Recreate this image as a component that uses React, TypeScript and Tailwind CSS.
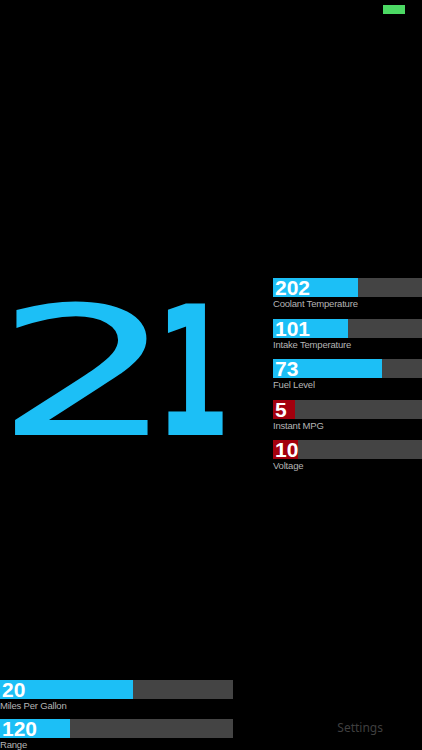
import React from "react";

const BLUE = "bg-[#1cbff6]";
const RED = "bg-[#a3000d]";

interface Gauge {
	value: string;
	label: string;
	fill: number; // px
	tone: "blue" | "red";
}

const sideGauges: Gauge[] = [
	{ value: "202", label: "Coolant Temperature", fill: 85, tone: "blue" },
	{ value: "101", label: "Intake Temperature", fill: 75, tone: "blue" },
	{ value: "73", label: "Fuel Level", fill: 109, tone: "blue" },
	{ value: "5", label: "Instant MPG", fill: 22, tone: "red" },
	{ value: "10", label: "Voltage", fill: 25, tone: "red" },
];

const bottomGauges: Gauge[] = [
	{ value: "20", label: "Miles Per Gallon", fill: 133, tone: "blue" },
	{ value: "120", label: "Range", fill: 70, tone: "blue" },
];

function GaugeBar({ g, width }: { g: Gauge; width: number }) {
	return (
		<div className="flex flex-col shrink-0" style={{ width }}>
			<div className="relative h-[19px] bg-[#444444]">
				<div
					className={`h-full ${g.tone === "blue" ? BLUE : RED}`}
					style={{ width: g.fill }}
				/>
				<span className="absolute left-[2px] top-[-2px] text-[21px] leading-[24px] font-bold text-white font-['Liberation_Sans',Arial,sans-serif]">
					{g.value}
				</span>
			</div>
			<div className="h-[13px] text-[9.5px] leading-[13px] text-[#b5b5b5] tracking-[-0.2px] whitespace-nowrap font-['Liberation_Sans',Arial,sans-serif]">
				{g.label}
			</div>
		</div>
	);
}

export default function App() {
	return (
		<div className="relative h-[750px] w-[422px] bg-black overflow-hidden flex flex-col font-['Liberation_Sans',Arial,sans-serif]">
			<div className="h-[20px] flex justify-end items-start pt-[5px] pr-[17px]">
				<div className="w-[22px] h-[9px] bg-[#4cd964]" />
			</div>

			<div className="flex items-center mt-[258px]">
				<div className="w-[273px] shrink-0 flex items-center h-[194px] pb-[4px] text-[#1cbff6] text-[180px] leading-none font-['DejaVu_Sans',sans-serif]">
					<span className="inline-block tracking-[-30px] origin-[10px_50%] scale-x-[1.59]">2</span>
					<span className="inline-block ml-[71px] origin-left scale-x-[0.59] font-bold">1</span>
				</div>
				<div className="flex flex-col gap-[8.5px] shrink-0">
					{sideGauges.map((g) => (
						<GaugeBar key={g.label} g={g} width={149} />
					))}
				</div>
			</div>

			<div className="flex items-start justify-between mt-[auto] h-[70px]">
				<div className="flex flex-col gap-[7px]">
					{bottomGauges.map((g) => (
						<GaugeBar key={g.label} g={g} width={233} />
					))}
				</div>
				<div className="pr-[39px] pt-[39px] text-[12px] text-[#3f3f3f] font-['Noto_Sans',sans-serif]">
					Settings
				</div>
			</div>
		</div>
	);
}
